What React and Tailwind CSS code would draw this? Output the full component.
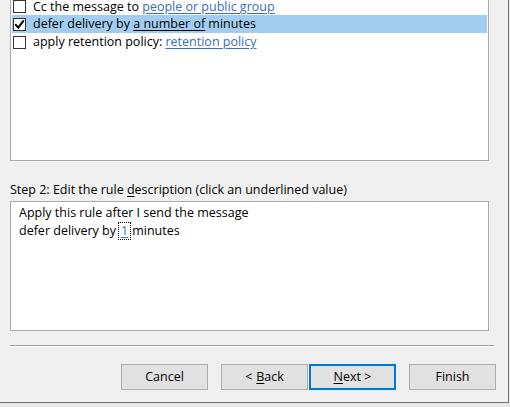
import React from 'react';

const font = { fontFamily: '"Open Sans", "Noto Sans", sans-serif' };

function CheckBox({ checked }) {
  return (
    <div className="w-[13px] h-[13px] border border-[#333333] bg-white flex items-center justify-center shrink-0">
      {checked && (
        <svg width="11" height="11" viewBox="0 0 11 11">
          <path d="M1.2 5.2 L4.2 8.6 L9.8 1.4" fill="none" stroke="#000" strokeWidth="2" />
        </svg>
      )}
    </div>
  );
}

function Link({ children }) {
  return <span className="text-[#3a6cc0] underline underline-offset-2">{children}</span>;
}

function Row({ checked, selected, first, children }) {
  return (
    <div
      className={`${first ? 'h-[15px] items-start' : 'h-[18px] items-center'} flex pl-[1px] ${
        selected ? 'bg-[#a3cdf0]' : ''
      }`}
    >
      <CheckBox checked={checked} />
      <div className={`ml-[7px] whitespace-nowrap ${first ? 'leading-[14px]' : 'leading-[18px]'}`}>{children}</div>
    </div>
  );
}

function Button({ children, primary }) {
  return (
    <div
      className={`w-[87px] h-[26px] flex items-center justify-center bg-[#e1e1e1] text-[12.5px] text-black ${
        primary ? 'border-2 border-[#0078d7]' : 'border border-[#adadad]'
      }`}
    >
      {children}
    </div>
  );
}

export default function App() {
  return (
    <div className="w-[510px] h-[407px] overflow-hidden bg-[#e9e9e9]" style={font}>
      <div className="w-[509px] h-[403px] bg-[#f0f0f0] border-r border-b border-[#6d7178] pl-[10px] flex flex-col text-[12.5px] text-black">
        {/* Step 1 list */}
        <div className="w-[479px] h-[161px] bg-white border border-t-0 border-[#a9abaf] px-[1px] flex flex-col">
          <Row first>
            Cc the message to <Link>people or public group</Link>
          </Row>
          <Row checked selected>
            defer delivery by <span className="underline underline-offset-2">a number of</span> minutes
          </Row>
          <Row>
            apply retention policy: <Link>retention policy</Link>
          </Row>
        </div>

        <div className="mt-[21px] h-[16px] leading-[16px] whitespace-nowrap">
          Step 2: Edit the rule <span className="underline underline-offset-2">d</span>escription (click an underlined value)
        </div>

        {/* Step 2 description */}
        <div className="mt-[3px] w-[479px] h-[130px] bg-white border border-[#a9abaf] pl-[8px] pt-[2px] leading-[18px]">
          <div>Apply this rule after I send the message</div>
          <div className="flex items-center whitespace-nowrap">
            defer delivery by
            <span className="ml-[2px] mr-[1px] h-[18px] border border-dotted border-black px-[2px] leading-[16px]">
              <Link>1</Link>
            </span>
            minutes
          </div>
        </div>

        <div className="mt-[14px] w-[484px] h-[2px] border-t border-[#a0a0a0] border-b border-b-white" />

        <div className="mt-[17px] flex pl-[111px]">
          <Button>Cancel</Button>
          <div className="ml-[13px]">
            <Button>
              &lt; <span className="underline underline-offset-2 ml-[4px]">B</span>ack
            </Button>
          </div>
          <div className="ml-[1px]">
            <Button primary>
              <span className="underline underline-offset-2">N</span>ext &gt;
            </Button>
          </div>
          <div className="ml-[13px]">
            <Button>Finish</Button>
          </div>
        </div>
      </div>
    </div>
  );
}
